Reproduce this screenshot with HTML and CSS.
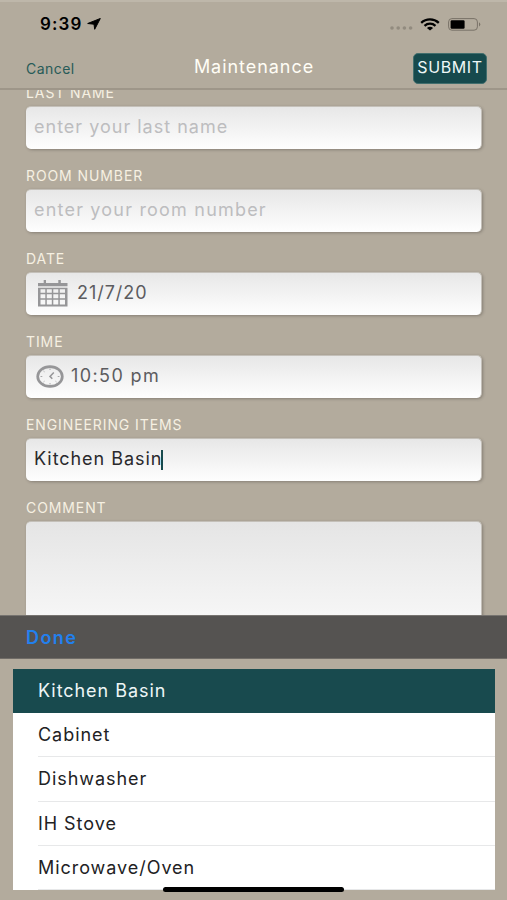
FILE: index.html
```html
<!DOCTYPE html>
<html lang="en">
<head>
  <meta charset="UTF-8">
  <meta name="viewport" content="width=device-width, initial-scale=1.0">
  <title>Maintenance</title>
  <link rel="stylesheet" href="styles.css">
</head>
<body>
  <header class="header">
    <div class="status">
      <span class="clock">9:39</span>
      <svg class="location" width="14" height="12" viewBox="0 0 14 12"><path d="M13.3 0.5L0.7 5.5L7 6.2L7.7 11.3Z" stroke="#000" stroke-width="1" stroke-linejoin="round"/></svg>
      <div class="status-icons">
        <svg width="23" height="4" viewBox="0 0 23 4" fill="#928b7f"><circle cx="2" cy="2" r="1.8"/><circle cx="8.2" cy="2" r="1.8"/><circle cx="14.4" cy="2" r="1.8"/><circle cx="20.6" cy="2" r="1.8"/></svg>
        <svg class="wifi" width="20" height="13" viewBox="0 0 20 13" fill="none" stroke="#000" stroke-width="2.3"><path d="M1.2 4.8C6.2 0.2 13.8 0.2 18.8 4.8"/><path d="M4.5 7.8C7.7 5 12.3 5 15.5 7.8"/><path d="M6.9 9.9Q10 7.4 13.1 9.9L10 12.6Z" fill="#000" stroke="none"/></svg>
        <svg class="battery" width="33" height="13" viewBox="0 0 33 13"><rect x="0.6" y="0.6" width="28.8" height="11.6" rx="3.3" fill="none" stroke="#797267"/><rect x="2.6" y="2.3" width="14" height="8.4" rx="1.2"/><path d="M31 4.2Q33.6 6.4 31 8.6Z" fill="#797267"/></svg>
      </div>
    </div>
    <nav class="nav">
      <a class="cancel">Cancel</a>
      <h1>Maintenance</h1>
      <button class="btn">SUBMIT</button>
    </nav>
  </header>

  <main class="form">
    <div class="form-group">
      <label for="lastName">LAST NAME</label>
      <div class="field"><input type="text" id="lastName" placeholder="enter your last name"></div>
    </div>
    <div class="form-group">
      <label for="roomNumber">ROOM NUMBER</label>
      <div class="field"><input class="room" type="text" id="roomNumber" placeholder="enter your room number"></div>
    </div>
    <div class="form-group">
      <label>DATE</label>
      <div class="field picked">
        <svg class="calendar" width="30" height="27" viewBox="0 0 30 27" fill="#969698"><path d="M0 3H5.7V0H8V3H20.3V0H22.8V3H29.5V6.2H0Z"/><path fill-rule="evenodd" d="M0 7.7H29.5V26.5H0ZM2.5 9.3V12.7H7.3V9.3ZM8.8 9.3V12.7H13.8V9.3ZM15.3 9.3V12.7H20.3V9.3ZM21.8 9.3V12.7H27V9.3ZM2.5 14.2V18.2H7.3V14.2ZM8.8 14.2V18.2H13.8V14.2ZM15.3 14.2V18.2H20.3V14.2ZM21.8 14.2V18.2H27V14.2ZM2.5 19.7V24.5H7.3V19.7ZM8.8 19.7V24.5H13.8V19.7ZM15.3 19.7V24.5H20.3V19.7ZM21.8 19.7V24.5H27V19.7Z"/></svg>
        <span class="date">21/7/20</span>
      </div>
    </div>
    <div class="form-group">
      <label>TIME</label>
      <div class="field picked">
        <svg class="time-icon" width="28" height="23" viewBox="0 0 28 23" fill="none" stroke="#969698"><ellipse cx="14" cy="11.5" rx="12.3" ry="9.9" stroke-width="2.7"/><path d="M17.8 7.5L14 11.4L16.3 13.7" stroke-width="1.5"/><path d="M14 3.5V5M14 18V19.5M4.5 11.5H6.3M21.7 11.5H23.5M7.5 6L8.5 6.8M7.5 17L8.5 16.2M20.5 17L19.5 16.2" stroke-width="0.8"/></svg>
        <span class="time">10:50 pm</span>
      </div>
    </div>
    <div class="form-group">
      <label>ENGINEERING ITEMS</label>
      <div class="field active"><span>Kitchen Basin</span><i class="caret"></i></div>
    </div>
    <div class="form-group">
      <label>COMMENT</label>
      <div class="field comment"></div>
    </div>
  </main>

  <div class="toolbar"><a class="done">Done</a></div>
  <ul class="picker">
    <li class="selected">Kitchen Basin</li>
    <li>Cabinet</li>
    <li>Dishwasher</li>
    <li>IH Stove</li>
    <li>Microwave/Oven</li>
  </ul>
  <div class="home-bar"></div>
</body>
</html>
```
FILE: styles.css
```css
* { box-sizing: border-box; }
body { margin: 0; height: 900px; overflow: hidden; position: relative; background: #b3ab9d; font-family: Inter, "Liberation Sans", sans-serif; font-size: 18px; letter-spacing: 0.95px; }
.header { height: 90px; border-bottom: 2px solid #9e9689; box-shadow: inset 0 2px #beb7aa; }
.status { height: 48px; padding: 0 26px 0 40px; display: flex; align-items: center; }
.clock { font-size: 17px; font-weight: 600; letter-spacing: 1.1px; }
.location { margin-left: 5px; }
.status-icons { margin-left: auto; display: flex; align-items: center; }
.status-icons svg:first-child { margin-top: 8px; }
.wifi { margin-left: 7px; }
.battery { margin-left: 8px; }
.nav { height: 40px; padding: 0 20px 0 26px; display: grid; grid-template-columns: 74px 1fr 74px; align-items: center; }
.cancel { color: #285b58; font-size: 14px; letter-spacing: 0.45px; }
h1 { margin: -3px 5px 0 0; color: #fffdf5; font-size: 18px; font-weight: 400; text-align: center; }
.btn { width: 74px; height: 31px; padding: 0 0 2px; border: 1px solid #416e6d; border-radius: 5px; background: #164a4d; color: #eff8f7; font: 16px Inter, sans-serif; letter-spacing: 0.6px; }
.form { height: 525px; padding: 0 25px 0 26px; overflow: hidden; }
.form-group { height: 83px; }
.form-group:first-child { margin-top: -24px; }
label { display: block; height: 40px; padding-top: 18px; color: #f6f0e2; font-size: 14px; line-height: 17px; letter-spacing: 0.9px; }
.field { height: 43px; padding: 0 8px 3px; display: flex; align-items: center; border: 1px solid #c4c0b9; border-width: 1px 1px 0 0; border-radius: 5px; background: linear-gradient(#e7e7e7, #fefefe); box-shadow: 1px 1px 3px rgba(70, 65, 60, 0.4); }
input { width: 100%; padding: 0; border: none; outline: none; background: none; font: inherit; letter-spacing: 1px; }
.room { letter-spacing: 1.2px; }
input::placeholder { color: #bdbdbf; opacity: 1; }
.picked { padding-left: 10px; color: #5c5c5f; }
.calendar { margin: 2px 9px 0 2px; }
.time-icon { margin: 2px 7px 0 0; }
.time { letter-spacing: 1.4px; }
.active { color: #29292c; }
.caret { width: 2px; height: 20px; margin: 2px 0 0 -1px; background: #174a4d; }
.comment { height: 130px; background: linear-gradient(#e5e5e5, #fcfcfc); }
.toolbar { height: 44px; padding-left: 26px; display: flex; align-items: center; background: #555351; border-top: 1px solid #777470; border-bottom: 1px solid #706c67; }
.done { color: #2280ee; font-weight: 600; letter-spacing: 1.4px; }
.picker { height: 221px; margin: 10px 12px 0 13px; padding: 0; list-style: none; background: #fff; color: #222224; }
.picker li { height: 44.2px; margin-left: 25px; border-bottom: 1px solid #e7e8e9; line-height: 43px; }
.picker .selected { margin-left: 0; padding-left: 25px; border-bottom-color: #184a4e; background: #184a4e; color: #edf6f6; }
.home-bar { position: absolute; left: 163px; top: 887px; width: 181px; height: 5px; border-radius: 3px; background: #000; }
```
